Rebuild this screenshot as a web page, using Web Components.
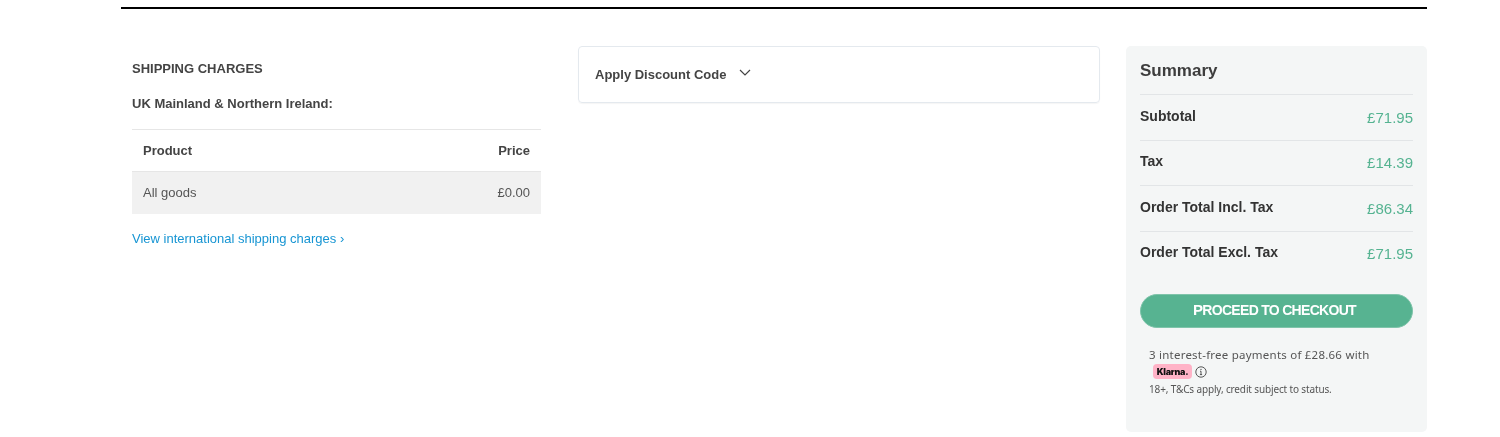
<!DOCTYPE html>
<html>
<head>
<meta charset="utf-8">
<style>
html, body { margin: 0; padding: 0; background: #fff; }
body { font-family: "Liberation Sans", Arial, sans-serif; color: #333; overflow: hidden; }
</style>
</head>
<body>
<cart-page>
  <shipping-charges slot="left"></shipping-charges>
  <discount-panel slot="middle"></discount-panel>
  <order-summary slot="right">
    <summary-row label="Subtotal" value="£71.95"></summary-row>
    <summary-row label="Tax" value="£14.39"></summary-row>
    <summary-row label="Order Total Incl. Tax" value="£86.34"></summary-row>
    <summary-row label="Order Total Excl. Tax" value="£71.95"></summary-row>
    <checkout-button slot="actions">PROCEED TO CHECKOUT</checkout-button>
    <klarna-note slot="actions"></klarna-note>
  </order-summary>
</cart-page>

<script>
class CartPage extends HTMLElement {
    constructor() {
        super();
        this.attachShadow({ mode: 'open' });
        this.shadowRoot.innerHTML = `
            <style>
                :host { display: block; width: 1306px; margin-left: 121px; will-change: transform; }
                .rule { height: 2px; background: #000; margin-top: 7px; }
                .cols { display: flex; align-items: flex-start; padding-top: 37px; }
                .left { width: 409px; margin-left: 11px; }
                .middle { width: 522px; margin-left: 37px; }
                .right { width: 301px; margin-left: 26px; }
            </style>
            <div class="rule"></div>
            <div class="cols">
                <div class="left"><slot name="left"></slot></div>
                <div class="middle"><slot name="middle"></slot></div>
                <div class="right"><slot name="right"></slot></div>
            </div>
        `;
    }
}

class ShippingCharges extends HTMLElement {
    constructor() {
        super();
        this.attachShadow({ mode: 'open' });
        this.shadowRoot.innerHTML = `
            <style>
                :host { display: block; color: #444; font-size: 13px; }
                h3 { margin: 15px 0 0; font-size: 13px; line-height: 15px; font-weight: 700; }
                h4 { margin: 20px 0 0; font-size: 13px; line-height: 15px; font-weight: 700; }
                .table { margin-top: 18px; border-top: 1px solid #e6e6e6; }
                .row { display: flex; justify-content: space-between; align-items: center; padding: 0 11px; }
                .head { height: 41px; font-weight: 700; border-bottom: 1px solid #e6e6e6; }
                .body { height: 42px; box-sizing: border-box; padding-bottom: 2px; background: #f1f1f1; color: #555; }
                a { display: block; margin-top: 17px; line-height: 15px; color: #1795d3; text-decoration: none; }
            </style>
            <h3>SHIPPING CHARGES</h3>
            <h4>UK Mainland &amp; Northern Ireland:</h4>
            <div class="table">
                <div class="row head"><span>Product</span><span>Price</span></div>
                <div class="row body"><span>All goods</span><span>£0.00</span></div>
            </div>
            <a href="#">View international shipping charges ›</a>
        `;
    }
}

class DiscountPanel extends HTMLElement {
    constructor() {
        super();
        this.attachShadow({ mode: 'open' });
        this.shadowRoot.innerHTML = `
            <style>
                :host { display: block; }
                .box {
                    display: flex; align-items: center; gap: 12px; height: 55px; padding: 0 16px;
                    border: 1px solid #e4e9ee; border-radius: 4px; box-shadow: 0 1px 1px rgba(0,0,0,.04);
                    font-size: 13px; font-weight: 700; color: #444;
                }
                svg { display: block; margin-top: -3px; }
            </style>
            <div class="box">
                <span>Apply Discount Code</span>
                <svg width="14" height="14" viewBox="0 0 14 14" fill="none" stroke="#444" stroke-width="1.2">
                    <path d="M2 4l5 5 5-5"/>
                </svg>
            </div>
        `;
    }
}

class OrderSummary extends HTMLElement {
    constructor() {
        super();
        this.attachShadow({ mode: 'open' });
        this.shadowRoot.innerHTML = `
            <style>
                :host { display: block; height: 386px; box-sizing: border-box; padding: 0 14px; background: #f4f6f6; border-radius: 5px; }
                h2 { margin: 0; height: 48.4px; line-height: 50px; font-size: 17px; font-weight: 700; color: #3d3d3d; }
                .actions { padding-top: 17.6px; }
            </style>
            <h2>Summary</h2>
            <slot></slot>
            <div class="actions"><slot name="actions"></slot></div>
        `;
    }
}

class SummaryRow extends HTMLElement {
    constructor() {
        super();
        this.attachShadow({ mode: 'open' });
        this.shadowRoot.innerHTML = `
            <style>
                :host { display: block; border-top: 1px solid #e2e5e7; }
                .row { display: flex; justify-content: space-between; height: 44.4px; padding-top: 12.6px; box-sizing: border-box; }
                .label { font-size: 14px; line-height: 16px; font-weight: 700; color: #333; }
                .value { font-size: 15px; line-height: 20px; color: #55b391; }
            </style>
            <div class="row">
                <span class="label">${this.getAttribute('label')}</span>
                <span class="value">${this.getAttribute('value')}</span>
            </div>
        `;
    }
}

class CheckoutButton extends HTMLElement {
    constructor() {
        super();
        this.attachShadow({ mode: 'open' });
        this.shadowRoot.innerHTML = `
            <style>
                :host {
                    display: block; box-sizing: border-box; height: 34px; padding-right: 4px;
                    background: #57b391; border: 1px solid #7fc4aa; border-radius: 17px; color: #fff;
                    font-size: 14px; font-weight: 700; letter-spacing: -.7px; line-height: 30px; text-align: center;
                }
                .t::first-letter { font-size: 15px; }
                .t { display: block; }
            </style>
            <span class="t"><slot></slot></span>
        `;
    }
}

class KlarnaNote extends HTMLElement {
    constructor() {
        super();
        this.attachShadow({ mode: 'open' });
        this.shadowRoot.innerHTML = `
            <style>
                :host { display: block; padding: 19px 0 0 9px; font-family: "Noto Sans", sans-serif; color: #555; }
                .line { font-size: 11.5px; line-height: 16px; letter-spacing: .23px; }
                .badge-row { display: flex; align-items: center; gap: 3px; height: 18px; padding-left: 4px; }
                .badge {
                    display: block; width: 39px; height: 15px; text-align: center;
                    background: #ffb3c7; color: #111; border-radius: 4px;
                    line-height: 15px; font-size: 9px; font-weight: 900; letter-spacing: -.25px; font-family: "Inter", sans-serif;
                }
                .fine { font-size: 10px; line-height: 14px; margin-top: 1px; letter-spacing: -.14px; }
                svg { display: block; }
            </style>
            <div class="line">3 interest-free payments of £28.66 with</div>
            <div class="badge-row">
                <span class="badge">Klarna.</span>
                <svg width="12" height="12" viewBox="0 0 12 12" fill="none" stroke="#444">
                    <circle cx="6" cy="6" r="5.2" stroke-width=".9"/>
                    <path d="M6 5.2v3.4M4.9 8.6h2.2M5 5.2h1" stroke-width=".9"/>
                    <circle cx="6" cy="3.4" r=".6" fill="#444" stroke="none"/>
                </svg>
            </div>
            <div class="fine">18+, T&amp;Cs apply, credit subject to status.</div>
        `;
    }
}

customElements.define('cart-page', CartPage);
customElements.define('shipping-charges', ShippingCharges);
customElements.define('discount-panel', DiscountPanel);
customElements.define('order-summary', OrderSummary);
customElements.define('summary-row', SummaryRow);
customElements.define('checkout-button', CheckoutButton);
customElements.define('klarna-note', KlarnaNote);
</script>
</body>
</html>
